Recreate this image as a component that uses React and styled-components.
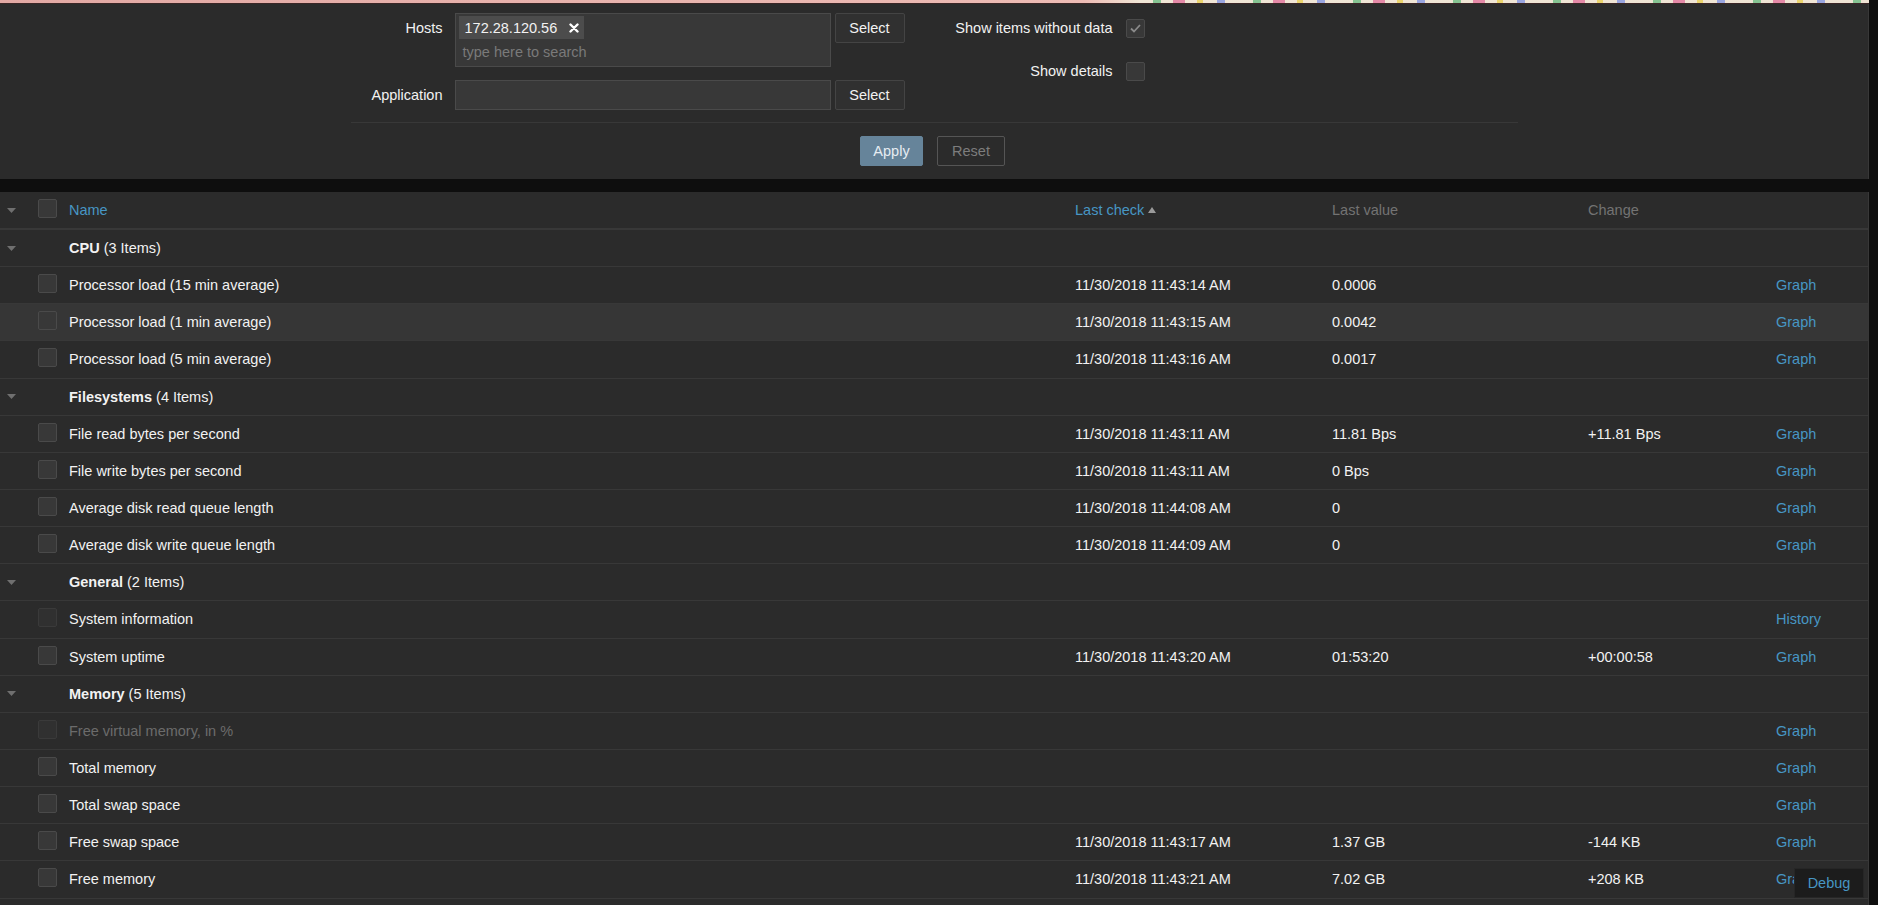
import React from "react";
import styled, { createGlobalStyle } from "styled-components";

const GlobalStyle = createGlobalStyle`
  html, body {
    margin: 0;
    padding: 0;
    background: #0e0e0e;
    overflow: hidden;
  }
  body {
    font-family: "Liberation Sans", Arial, sans-serif;
    font-size: 14.5px;
    color: #f2f2f2;
  }
`;

const Page = styled.div`
  width: 1869px;
  min-height: 905px;
`;

// decorative strip at the very top (pink + flower pattern)
const Banner = styled.div`
  height: 3px;
  border-bottom: 1px solid #3b2626;
  background:
    repeating-linear-gradient(90deg,
      transparent 0 14px, #86c493 14px 22px, transparent 22px 34px,
      #e58aa8 34px 46px, transparent 46px 58px, #ead46e 58px 64px,
      transparent 64px 78px, #9aa6e0 78px 86px, transparent 86px 100px)
      right / 730px 100% no-repeat,
    linear-gradient(90deg, #e2a9a4 0, #edbcb5 58%, #f0e6d6 61%, #efe4d4 100%);
`;

const FilterPanel = styled.section`
  background: #2b2b2b;
  padding: 9px 0 13px;
  border-right: 1px solid #383838;
`;

const FilterForm = styled.div`
  width: 1167px;
  margin: 0 auto;
`;

const FilterColumns = styled.div`
  display: flex;
`;

const FilterColumn = styled.div`
  display: grid;
  grid-template-columns: ${({ $labelWidth }) => $labelWidth}px auto;
  row-gap: 13px;
  align-content: start;
`;

const FieldLabel = styled.label`
  height: 30px;
  display: flex;
  align-items: center;
  justify-content: flex-end;
  padding-right: ${({ $pad }) => $pad || 12}px;
  white-space: nowrap;
`;

const FieldGroup = styled.div`
  display: flex;
  align-items: flex-start;
  gap: 4px;
`;

const MultiSelect = styled.div`
  width: 376px;
  height: 54px;
  box-sizing: border-box;
  background: #383838;
  border: 1px solid #4a4a4a;
  padding: 2px 3px;
`;

const Tag = styled.span`
  display: inline-flex;
  align-items: center;
  height: 23px;
  padding: 0 5px 0 6px;
  background: #4c4c4c;
  color: #f2f2f2;
  gap: 12px;
`;

const Placeholder = styled.div`
  height: 24px;
  line-height: 26px;
  padding-left: 4px;
  color: #7a7a7a;
`;

const TextInput = styled.div`
  width: 376px;
  height: 30px;
  box-sizing: border-box;
  background: #383838;
  border: 1px solid #4a4a4a;
`;

const Button = styled.button`
  width: ${({ $width }) => $width || 70}px;
  height: 30px;
  box-sizing: border-box;
  font-family: inherit;
  font-size: 14.5px;
  border-radius: 2px;
  cursor: pointer;
  background: ${({ $kind }) =>
    $kind === "primary" ? "#66849a" : $kind === "outline" ? "transparent" : "#303030"};
  color: ${({ $kind }) =>
    $kind === "primary" ? "#e6edf2" : $kind === "outline" ? "#7d7d7d" : "#f2f2f2"};
  border: 1px solid ${({ $kind }) =>
    $kind === "primary" ? "#66849a" : $kind === "outline" ? "#555555" : "#444444"};
`;

const Check = styled.span`
  display: inline-flex;
  align-items: center;
  justify-content: center;
  width: 19px;
  height: 19px;
  box-sizing: border-box;
  background: ${({ $dim }) => ($dim ? "#303030" : "#383838")};
  border: 1px solid ${({ $dim }) => ($dim ? "#3a3a3a" : "#4a4a4a")};
  border-radius: 2px;
`;

const CheckCell = styled.div`
  height: 30px;
  display: flex;
  align-items: center;
`;

const Divider = styled.div`
  margin-top: 12px;
  border-top: 1px solid #383838;
`;

const ButtonBar = styled.div`
  margin-top: 13px;
  display: flex;
  justify-content: center;
  gap: 14px;
  padding-right: 3px;
`;

const Table = styled.div`
  margin-top: 13px;
  background: #2b2b2b;
  border-right: 1px solid #383838;
`;

const Row = styled.div`
  display: grid;
  grid-template-columns: 38px 31px 1006px 257px 256px 188px 1fr;
  align-items: center;
  height: ${({ $head }) => ($head ? "38px" : "37.15px")};
  box-sizing: border-box;
  border-bottom: ${({ $head }) => ($head ? "2px" : "1px")} solid #383838;
  background: ${({ $hover }) => ($hover ? "#363636" : "transparent")};
  white-space: nowrap;
`;

const Cell = styled.div`
  color: ${({ $tone }) =>
    $tone === "link" ? "#4796c4" : $tone === "muted" ? "#737373" : $tone === "off" ? "#6b6b6b" : "#f2f2f2"};
  display: flex;
  align-items: center;
`;

const ToggleCell = styled.div`
  padding-left: 7px;
  display: flex;
  align-items: center;
`;

const GroupName = styled.b`
  font-weight: bold;
  margin-right: 4px;
`;

const DebugButton = styled.div`
  position: fixed;
  right: 14px;
  bottom: 7px;
  width: 70px;
  height: 30px;
  box-sizing: border-box;
  display: flex;
  align-items: center;
  justify-content: center;
  background: #1c1c1c;
  border: 1px solid #262626;
  color: #4796c4;
`;

const Arrow = () => (
  <svg width="9" height="5" viewBox="0 0 9 5">
    <polygon points="0,0 9,0 4.5,5" fill="#6f6f6f" />
  </svg>
);

const SortUp = () => (
  <svg width="8" height="6" viewBox="0 0 8 6" style={{ marginLeft: 4 }}>
    <polygon points="0,6 8,6 4,0" fill="#9a9a9a" />
  </svg>
);

const CloseX = () => (
  <svg width="10" height="10" viewBox="0 0 10 10">
    <path d="M1.5 1.5 L8.5 8.5 M8.5 1.5 L1.5 8.5" stroke="#ffffff" strokeWidth="2.4" strokeLinecap="round" />
  </svg>
);

const Tick = () => (
  <svg width="11" height="9" viewBox="0 0 11 9">
    <path d="M1 4.5 L4 7.5 L10 1" stroke="#8a8a8a" strokeWidth="1.8" fill="none" />
  </svg>
);

const groups = [
  {
    name: "CPU",
    count: 3,
    items: [
      { name: "Processor load (15 min average)", check: "11/30/2018 11:43:14 AM", value: "0.0006" },
      { name: "Processor load (1 min average)", check: "11/30/2018 11:43:15 AM", value: "0.0042", hover: true },
      { name: "Processor load (5 min average)", check: "11/30/2018 11:43:16 AM", value: "0.0017" },
    ],
  },
  {
    name: "Filesystems",
    count: 4,
    items: [
      { name: "File read bytes per second", check: "11/30/2018 11:43:11 AM", value: "11.81 Bps", change: "+11.81 Bps" },
      { name: "File write bytes per second", check: "11/30/2018 11:43:11 AM", value: "0 Bps" },
      { name: "Average disk read queue length", check: "11/30/2018 11:44:08 AM", value: "0" },
      { name: "Average disk write queue length", check: "11/30/2018 11:44:09 AM", value: "0" },
    ],
  },
  {
    name: "General",
    count: 2,
    items: [
      { name: "System information", action: "History", dim: true },
      { name: "System uptime", check: "11/30/2018 11:43:20 AM", value: "01:53:20", change: "+00:00:58" },
    ],
  },
  {
    name: "Memory",
    count: 5,
    items: [
      { name: "Free virtual memory, in %", off: true, dim: true },
      { name: "Total memory" },
      { name: "Total swap space" },
      { name: "Free swap space", check: "11/30/2018 11:43:17 AM", value: "1.37 GB", change: "-144 KB" },
      { name: "Free memory", check: "11/30/2018 11:43:21 AM", value: "7.02 GB", change: "+208 KB" },
    ],
  },
];

function ItemRow({ item }) {
  return (
    <Row $hover={item.hover}>
      <div />
      <div>
        <Check $dim={item.dim} />
      </div>
      <Cell $tone={item.off ? "off" : undefined}>{item.name}</Cell>
      <Cell>{item.check}</Cell>
      <Cell>{item.value}</Cell>
      <Cell>{item.change}</Cell>
      <Cell $tone="link">{item.action || "Graph"}</Cell>
    </Row>
  );
}

export default function App() {
  return (
    <Page>
      <GlobalStyle />
      <Banner />
      <FilterPanel>
        <FilterForm>
          <FilterColumns>
            <FilterColumn $labelWidth={104}>
              <FieldLabel>Hosts</FieldLabel>
              <FieldGroup>
                <MultiSelect>
                  <Tag>
                    172.28.120.56
                    <CloseX />
                  </Tag>
                  <Placeholder>type here to search</Placeholder>
                </MultiSelect>
                <Button>Select</Button>
              </FieldGroup>
              <FieldLabel>Application</FieldLabel>
              <FieldGroup>
                <TextInput />
                <Button>Select</Button>
              </FieldGroup>
            </FilterColumn>
            <FilterColumn $labelWidth={221}>
              <FieldLabel $pad={13}>Show items without data</FieldLabel>
              <CheckCell>
                <Check>
                  <Tick />
                </Check>
              </CheckCell>
              <FieldLabel $pad={13}>Show details</FieldLabel>
              <CheckCell>
                <Check />
              </CheckCell>
            </FilterColumn>
          </FilterColumns>
          <Divider />
          <ButtonBar>
            <Button $kind="primary" $width={63}>Apply</Button>
            <Button $kind="outline" $width={68}>Reset</Button>
          </ButtonBar>
        </FilterForm>
      </FilterPanel>

      <Table>
        <Row $head>
          <ToggleCell>
            <Arrow />
          </ToggleCell>
          <div>
            <Check />
          </div>
          <Cell $tone="link">Name</Cell>
          <Cell $tone="link">
            Last check
            <SortUp />
          </Cell>
          <Cell $tone="muted">Last value</Cell>
          <Cell $tone="muted">Change</Cell>
          <div />
        </Row>
        {groups.map((g) => (
          <React.Fragment key={g.name}>
            <Row>
              <ToggleCell>
                <Arrow />
              </ToggleCell>
              <div />
              <Cell>
                <GroupName>{g.name}</GroupName>({g.count} Items)
              </Cell>
              <div />
              <div />
              <div />
              <div />
            </Row>
            {g.items.map((it) => (
              <ItemRow key={it.name} item={it} />
            ))}
          </React.Fragment>
        ))}
        <Row />
      </Table>
      <DebugButton>Debug</DebugButton>
    </Page>
  );
}
